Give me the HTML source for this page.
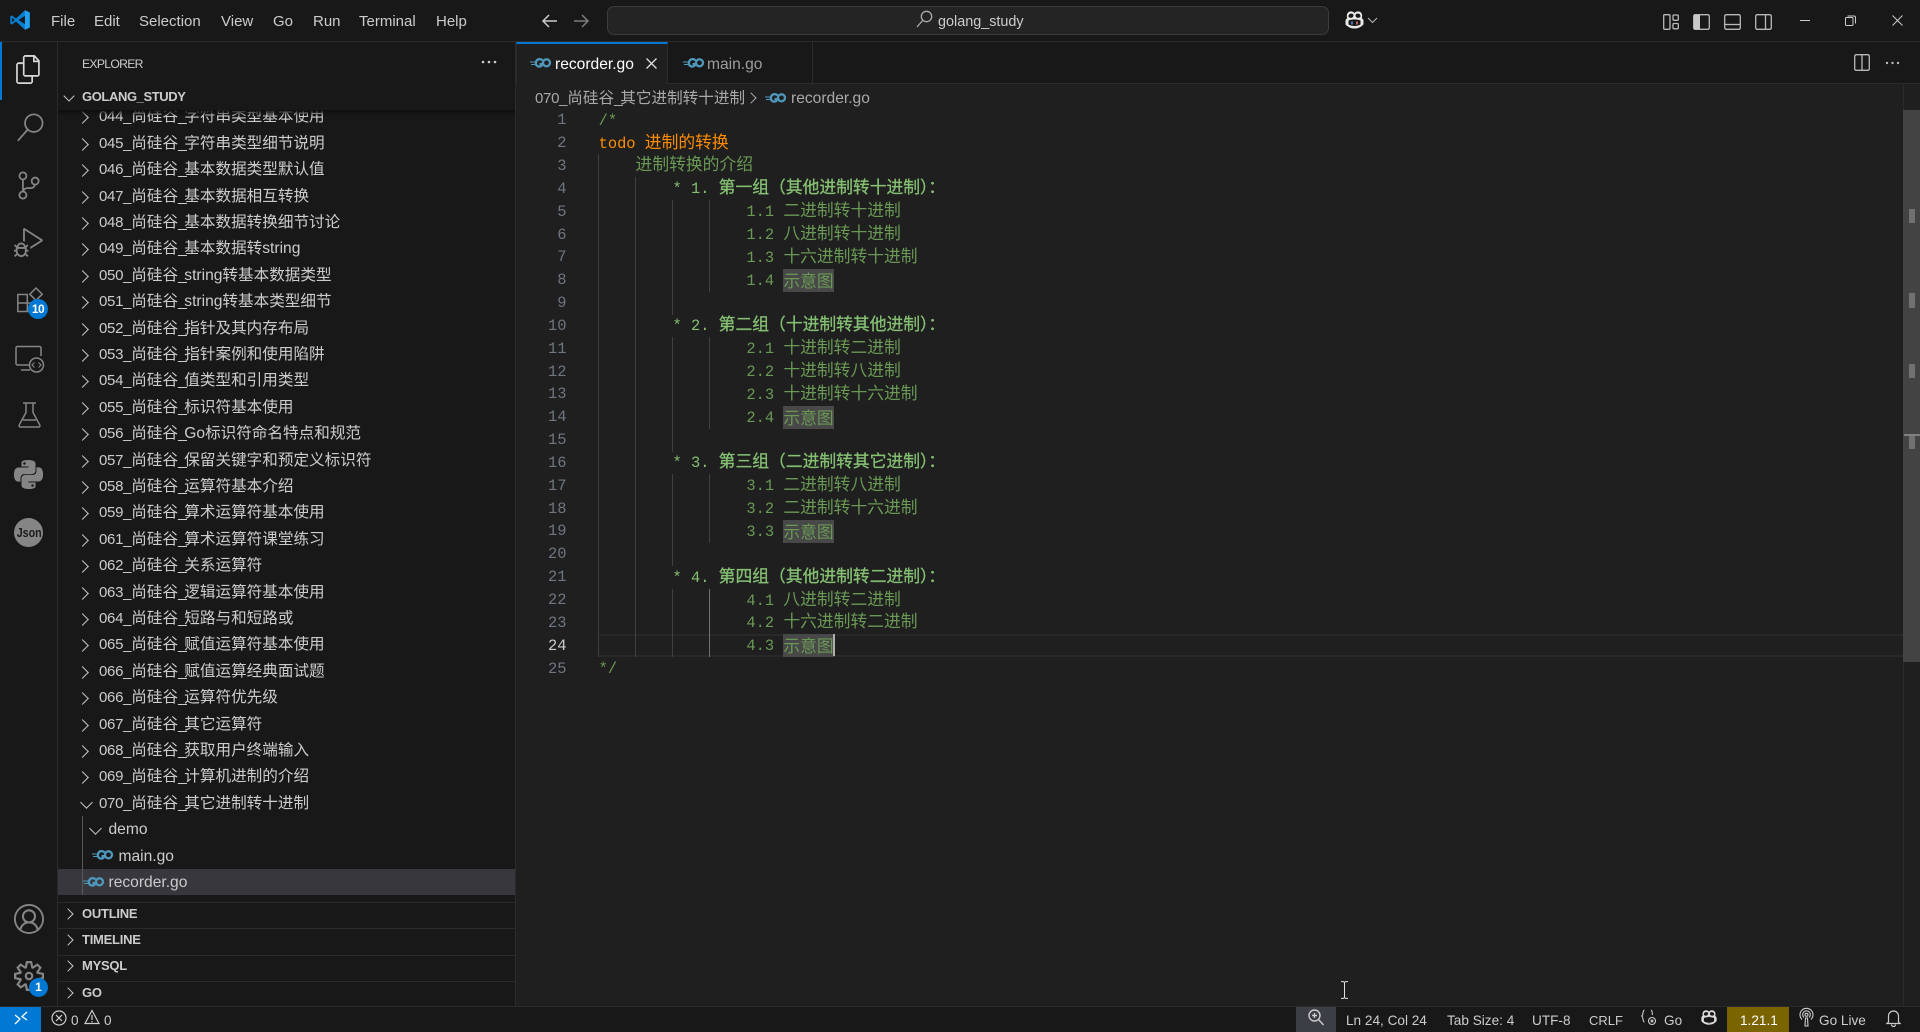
<!DOCTYPE html>
<html lang="zh"><head><meta charset="utf-8"><title>recorder.go - golang_study</title>
<style>
*{box-sizing:border-box;margin:0;padding:0}
html,body{width:1920px;height:1032px;overflow:hidden;background:#1f1f1f}
body{position:relative;font-family:"Liberation Sans","Noto Sans CJK SC",sans-serif;color:#ccc}
.a{position:absolute}
svg{position:absolute;display:block;overflow:visible}
.ic{fill:#858585}
.st{fill:none;stroke:#858585;stroke-width:1.5}
.t{position:absolute;white-space:nowrap}
.go{fill:none;stroke:#4f97bb;stroke-width:2.3}
.go path:first-child{stroke-width:1}
#title{left:0;top:0;width:1920px;height:42px;background:#181818;border-bottom:1px solid #2b2b2b}
.m{position:absolute;top:11px;font-size:15px;line-height:22px;color:#cccccc;white-space:nowrap}
#cc{left:607px;top:6px;width:722px;height:29px;background:#242424;border:1px solid #3c3c3c;border-radius:7px}
#act{left:0;top:42px;width:58px;height:964px;background:#181818;border-right:1px solid #2b2b2b}
#side{left:58px;top:42px;width:458px;height:964px;background:#181818;border-right:1px solid #2b2b2b}
#tree{position:absolute;left:0;top:68px;width:457px;height:795px;overflow:hidden}
#tree p{position:absolute;left:0;width:457px;height:26.4px;line-height:26.4px;font-size:15.6px;color:#cccccc;white-space:nowrap;padding-left:41px}
#tree p::before{content:"";position:absolute;left:20px;top:9px;width:8px;height:8px;border-top:1.4px solid #c5c5c5;border-right:1.4px solid #c5c5c5;transform:rotate(45deg)}
#tree p.o::before{left:23.5px;top:7px;transform:rotate(135deg)}
#tree p.d::before{left:33px}
#tree p.n::before{display:none}
u{display:inline-block;width:32.3px;text-decoration:none;font-size:15px;letter-spacing:-.02em}
s{text-decoration:none;letter-spacing:-2.5px}
.h{position:absolute;left:24px;font-size:13px;font-weight:bold;color:#cccccc;letter-spacing:-.25px;line-height:16px;white-space:nowrap}
.sep{position:absolute;left:0;width:457px;height:1px;background:#2b2b2b}
.ch{position:absolute;width:8px;height:8px;border-top:1.4px solid #c5c5c5;border-right:1.4px solid #c5c5c5;transform:rotate(45deg)}
#tabs{left:516px;top:42px;width:1404px;height:42px;background:#181818;border-bottom:1px solid #2b2b2b}
#code{left:598.6px;top:109.8px;font-family:"Liberation Mono","Noto Sans CJK SC",monospace;font-size:15.4px;color:#6a9955}
#code div{height:22.85px;line-height:22.85px;position:relative;white-space:pre}
#code i{font-style:normal;font-size:16.8px;line-height:0;font-family:"Noto Sans CJK SC",sans-serif}
#code .hl{background:#484848;display:inline-block;height:22.85px;line-height:22.85px;vertical-align:top;position:relative;top:-.8px}
#code .b{color:#84bf72}
#code .b i{-webkit-text-stroke:.3px #84bf72}
#code .td{color:#ff8c00}
#nums{left:520px;top:109.3px;width:46.5px;text-align:right;font-family:"Liberation Mono",monospace;font-size:15.4px;color:#6e7681}
#nums div{height:22.85px;line-height:22.85px}
.g{position:absolute;width:1px;background:#404040}
#status{left:0;top:1006px;width:1920px;height:26px;background:#181818;border-top:1px solid #2b2b2b;font-size:13.6px;color:#cccccc}
#status .t{top:3px;line-height:22px}
</style></head><body>

<div class="a" id="title">
<svg style="left:9px;top:9px" width="22" height="22" viewBox="0 0 24 24"><path d="M17.4 1.3 22.6 3.8V20.2L17.4 22.7 7.6 13.6 3.2 17 1.4 16V8l1.8-1 4.4 3.4z" fill="#0a7fd0"/><path d="M17.4 1.3 22.6 3.8V20.2L17.4 22.7z" fill="#21a2f0"/><path d="M17.4 7.4 10.6 12l6.8 4.6zM3.4 9.4V14.6L6 12z" fill="#181818"/></svg>
<span class="m" style="left:51px">File</span><span class="m" style="left:94px">Edit</span><span class="m" style="left:139px">Selection</span><span class="m" style="left:221px">View</span><span class="m" style="left:273px">Go</span><span class="m" style="left:313px">Run</span><span class="m" style="left:359px">Terminal</span><span class="m" style="left:436px">Help</span>
<svg style="left:541px;top:13px" width="18" height="16" viewBox="0 0 18 16"><path d="M16 8H2M8 2 2 8l6 6" fill="none" stroke="#cccccc" stroke-width="1.5"/></svg>
<svg style="left:572px;top:13px" width="18" height="16" viewBox="0 0 18 16"><path d="M2 8h14M10 2l6 6-6 6" fill="none" stroke="#7d7d7d" stroke-width="1.5"/></svg>
<div class="a" id="cc"></div>
<svg style="left:916px;top:10px" width="17" height="18" viewBox="0 0 17 18"><circle cx="10.5" cy="6.5" r="5.2" fill="none" stroke="#a9a9a9" stroke-width="1.3"/><path d="M6.8 10.3 1 17" stroke="#a9a9a9" stroke-width="1.3"/></svg>
<span class="t" style="left:938px;top:11px;font-size:14.4px;line-height:22px;color:#cccccc">golang_study</span>
<svg style="left:1344px;top:10px" width="21" height="20" viewBox="0 0 21 20"><path d="M3.2 8.2C2 4 4 1.4 7 1.4c1.6 0 2.8.6 3.5 1.7.7-1.1 1.9-1.7 3.5-1.7 3 0 5 2.6 3.8 6.8 1.2.6 1.7 1.6 1.7 2.8v2.6c0 .8-.5 1.5-1.2 1.9-2.100 2.100-4.800 3-7.800 3s-5.700-.9-7.800-2.900C2 15.500 1.500 14.800 1.500 14v-2.800c0-1.200.5-2.400 1.700-3z" fill="#e8e8e8"/><path d="M5 4.500c1-1 3.500-1.200 4.300 0 .5 1-.1 3-1.800 3.300-1.600.2-3.300-.4-3-2zM16 4.500c-1-1-3.500-1.200-4.300 0-.5 1 .1 3 1.800 3.300 1.600.2 3.300-.4 3-2zM4.500 10.500c3.500-1.300 8.500-1.300 12 0v4c-3.500 2-8.500 2-12 0z" fill="#181818"/><path d="M8 11.500v3" stroke="#4a7fd0" stroke-width="1.800"/><path d="M13 11.500v3" stroke="#d06a6a" stroke-width="1.800"/></svg>
<svg style="left:1367px;top:17px" width="11" height="7" viewBox="0 0 11 7"><path d="M1 1l4.500 4.500L10 1" fill="none" stroke="#b5b5b5" stroke-width="1.100"/></svg>
<svg style="left:1663px;top:14px" width="16" height="16" viewBox="0 0 16 16" fill="none" stroke="#b9b9b9" stroke-width="1.300"><rect x=".7" y=".7" width="6.300" height="14.600" rx="1"/><rect x="10" y="1" width="5.300" height="5.300" rx="1"/><rect x="10" y="9.500" width="5.300" height="5.300" rx="1"/></svg>
<svg style="left:1693px;top:14px" width="17" height="16" viewBox="0 0 17 16"><rect x=".7" y=".7" width="15.600" height="14.600" rx="1.500" fill="none" stroke="#b9b9b9" stroke-width="1.300"/><rect x="1" y="1" width="6" height="14" fill="#c8c8c8"/></svg>
<svg style="left:1724px;top:14px" width="17" height="16" viewBox="0 0 17 16" fill="none" stroke="#b9b9b9" stroke-width="1.300"><rect x=".7" y=".7" width="15.600" height="14.600" rx="1.500"/><path d="M1 10.500h15"/></svg>
<svg style="left:1755px;top:14px" width="17" height="16" viewBox="0 0 17 16" fill="none" stroke="#b9b9b9" stroke-width="1.300"><rect x=".7" y=".7" width="15.600" height="14.600" rx="1.500"/><path d="M10.500 1v14"/></svg>
<div class="a" style="left:1800px;top:20px;width:10px;height:1px;background:#cccccc"></div>
<svg style="left:1845px;top:15px" width="11" height="11" viewBox="0 0 11 11" fill="none" stroke="#cccccc" stroke-width="1"><rect x=".5" y="2.500" width="7.500" height="8" rx="1"/><path d="M2.500 1h6.500a1.500 1.500 0 0 1 1.500 1.500v6"/></svg>
<svg style="left:1892px;top:15px" width="11" height="11" viewBox="0 0 11 11"><path d="M.5.5l10 10M10.500.5l-10 10" stroke="#cccccc" stroke-width="1"/></svg>
</div>

<div class="a" id="act">
<div class="a" style="left:0;top:0;width:2px;height:58px;background:#0078d4"></div>
<svg style="left:15px;top:13px" width="27" height="29" viewBox="0 0 24 24" preserveAspectRatio="none"><path fill="#d7d7d7" d="M17.500 0h-9L7 1.500V6H2.500L1 7.500v15.070L2.500 24h12.070L16 22.570V18h4.700l1.300-1.430V4.500L17.500 0zm0 2.120l2.380 2.380H17.500V2.120zm-3 20.380h-12v-15H7v9.070L8.500 18h6v4.500zm6-6h-12v-15H16V6h4.500v10.500z"/></svg>
<svg style="left:15.500px;top:71px" width="28" height="29" viewBox="0 0 24 24"><path class="ic" d="M15.250 0a8.250 8.250 0 0 0-6.180 13.720L1 22.880l1.120 1 8.050-9.120A8.251 8.251 0 1 0 15.250.01V0zm0 15a6.750 6.750 0 1 1 0-13.500 6.750 6.750 0 0 1 0 13.500z"/></svg>
<svg style="left:15px;top:129px" width="28" height="29" viewBox="0 0 24 24"><path class="ic" d="M21.007 8.222A3.738 3.738 0 0 0 15.045 5.200a3.737 3.737 0 0 0 1.156 6.583 2.988 2.988 0 0 1-2.668 1.670h-2.990a4.456 4.456 0 0 0-2.989 1.165V7.400a3.737 3.737 0 1 0-1.494 0v9.117a3.776 3.776 0 1 0 1.816.099 2.990 2.990 0 0 1 2.668-1.667h2.990a4.484 4.484 0 0 0 4.223-3.039 3.736 3.736 0 0 0 3.250-3.687zM4.565 3.738a2.242 2.242 0 1 1 4.484 0 2.242 2.242 0 0 1-4.484 0zm4.484 16.441a2.242 2.242 0 1 1-4.484 0 2.242 2.242 0 0 1 4.484 0zm8.221-9.715a2.242 2.242 0 1 1 0-4.485 2.242 2.242 0 0 1 0 4.485z"/></svg>
<svg style="left:14px;top:186px" width="29" height="29" viewBox="0 0 24 24"><path class="ic" d="M10.940 13.500l-1.320 1.320a3.730 3.730 0 0 0-7.240 0L1.060 13.500 0 14.560l1.720 1.720-.22.220V18H0v1.500h1.500v.08c.077.489.214.966.41 1.420L0 22.940 1.060 24l1.650-1.650A4.308 4.308 0 0 0 6 24a4.310 4.310 0 0 0 3.290-1.650L10.940 24 12 22.940 10.090 21c.198-.464.336-.951.41-1.450v-.1H12V18h-1.500v-1.500l-.22-.22L12 14.560l-1.060-1.060zM6 13.500a2.250 2.250 0 0 1 2.250 2.250h-4.500A2.250 2.250 0 0 1 6 13.500zm3 6a3.330 3.330 0 0 1-3 3 3.330 3.330 0 0 1-3-3v-2.250h6v2.250zm14.760-9.900v1.260L13.500 17.370V15.600l8.500-5.370L9 2v9.460a5.070 5.070 0 0 0-1.500-.72V.63L8.640 0l15.120 9.600z"/></svg>
<svg style="left:17px;top:245px" width="26" height="26" viewBox="0 0 26 26"><path class="st" d="M.8 7.500h9.500v17H.8zM.8 16h17.500v8.500H10.300M10.300 7.500v8.500"/><path class="st" d="M19 1 25.200 7.200 19 13.400 12.800 7.200z"/></svg>
<div class="a" style="left:28px;top:257px;width:20px;height:20px;border-radius:50%;background:#0078d4;color:#fff;font-size:12px;font-weight:bold;line-height:20px;text-align:center;letter-spacing:-.5px">10</div>
<svg style="left:15px;top:303px" width="29" height="28" viewBox="0 0 29 28"><path class="st" d="M14 20H2.500A1.500 1.500 0 0 1 1 18.500V3A1.500 1.500 0 0 1 2.500 1.500h22A1.500 1.500 0 0 1 26 3v8M6 25h9"/><circle class="st" cx="21.500" cy="20" r="7"/><path d="M19.500 17.500 17 20l2.500 2.500M23.500 17.500 26 20l-2.500 2.500" fill="none" stroke="#858585" stroke-width="1.100"/></svg>
<svg style="left:18px;top:360px" width="23" height="26" viewBox="0 0 23 26"><path class="st" d="M5 1h13M8 1v9.500L1.200 23a1.300 1.300 0 0 0 1.200 2h18.200a1.300 1.300 0 0 0 1.200-2L15 10.500V1M5 18h13"/></svg>
<svg style="left:14px;top:418px" width="29" height="29" viewBox="0 0 24 24"><path class="ic" d="M14.250.18l.9.200.73.260.59.300.45.320.34.340.25.340.16.330.1.300.04.260.02.200-.01.130V8.500l-.05.630-.13.550-.21.460-.26.380-.3.310-.33.250-.35.190-.35.140-.33.100-.3.070-.26.040-.21.020H8.770l-.69.050-.59.140-.5.220-.41.270-.33.320-.27.350-.2.360-.15.370-.1.350-.07.320-.04.270-.02.210v3.060H3.170l-.21-.03-.28-.07-.32-.12-.35-.18-.36-.26-.36-.36-.35-.46-.32-.59-.28-.73-.21-.88-.14-1.050-.05-1.230.06-1.220.16-1.040.24-.87.32-.71.36-.57.4-.44.42-.33.42-.24.4-.16.36-.1.32-.05.24-.01h.16l.06.01h8.160v-.83H6.180l-.01-2.750-.02-.37.05-.34.11-.31.17-.28.25-.26.31-.23.38-.2.44-.18.51-.15.58-.12.64-.1.71-.06.77-.04.84-.02 1.270.05zm-6.300 1.980l-.23.33-.08.41.08.41.23.34.33.22.41.09.41-.09.33-.22.23-.34.08-.41-.08-.41-.23-.33-.33-.22-.41-.09-.41.09zm13.090 3.950l.28.06.32.12.35.18.36.27.36.35.35.47.32.59.28.73.21.88.14 1.040.05 1.230-.06 1.230-.16 1.040-.24.86-.32.71-.36.57-.4.45-.42.33-.42.24-.4.16-.36.09-.32.05-.24.02-.16-.01h-8.220v.82h5.840l.01 2.760.02.36-.05.34-.11.31-.17.29-.25.25-.31.24-.38.2-.44.17-.51.15-.58.13-.64.09-.71.07-.77.04-.84.01-1.270-.04-1.070-.14-.9-.2-.73-.25-.59-.3-.45-.33-.34-.34-.25-.34-.16-.33-.1-.3-.04-.25-.02-.2.01-.13v-5.340l.05-.64.13-.54.21-.46.26-.38.3-.32.33-.24.35-.2.35-.14.33-.1.3-.06.26-.04.21-.02.13-.01h5.840l.69-.05.59-.14.5-.21.41-.28.33-.32.27-.35.2-.36.15-.36.1-.35.07-.32.04-.28.02-.21V6.070h2.090l.14.01zm-6.470 14.250l-.23.33-.08.41.08.41.23.33.33.23.41.08.41-.08.33-.23.23-.33.08-.41-.08-.41-.23-.33-.33-.23-.41-.08-.41.08z"/></svg>
<div class="a" style="left:14px;top:475.500px;width:29px;height:29px;border-radius:50%;background:#858585;color:#1a1a1a;font-size:13px;font-weight:bold;line-height:29px;text-align:center"><span style="display:inline-block;transform:scaleX(.82)">Json</span></div>
<svg style="left:14px;top:862px" width="30" height="30" viewBox="0 0 16 16"><path class="ic" d="M16 7.992C16 3.580 12.416 0 8 0S0 3.580 0 7.992c0 2.430 1.104 4.620 2.832 6.090.016.016.032.016.032.032.144.112.288.224.448.336.08.048.144.111.224.175A7.980 7.980 0 0 0 8.016 16a7.980 7.980 0 0 0 4.480-1.375c.08-.048.144-.111.224-.16.144-.111.304-.223.448-.335.016-.016.032-.016.032-.032 1.696-1.487 2.800-3.676 2.800-6.106zm-8 7.001c-1.504 0-2.880-.48-4.016-1.279.016-.128.048-.255.08-.383a4.170 4.170 0 0 1 .416-.991c.176-.304.384-.576.64-.816.24-.24.528-.463.816-.639.304-.176.624-.304.976-.4A4.150 4.150 0 0 1 8 10.342a4.185 4.185 0 0 1 2.928 1.166c.368.368.656.8.864 1.295.112.288.192.592.24.911A7.030 7.030 0 0 1 8 14.993zm-2.448-7.400a2.490 2.490 0 0 1-.208-1.024c0-.351.064-.703.208-1.023.144-.32.336-.607.576-.847.24-.24.528-.431.848-.575.32-.144.672-.208 1.024-.208.368 0 .704.064 1.024.208.32.144.608.336.848.575.24.24.432.528.576.847.144.32.208.672.208 1.023 0 .368-.064.704-.208 1.023a3.010 3.010 0 0 1-.576.848 3.010 3.010 0 0 1-.848.575 2.590 2.590 0 0 1-2.064 0 3.010 3.010 0 0 1-.848-.575 2.500 2.500 0 0 1-.56-.848zm7.424 5.306c0-.032-.016-.048-.016-.08a5.220 5.220 0 0 0-.688-1.406 4.883 4.883 0 0 0-1.088-1.135 5.207 5.207 0 0 0-1.040-.608 2.820 2.820 0 0 0 .464-.383 4.200 4.200 0 0 0 .624-.784 3.624 3.624 0 0 0 .528-1.934 3.710 3.710 0 0 0-.288-1.470 3.799 3.799 0 0 0-.816-1.199 3.845 3.845 0 0 0-1.200-.8 3.720 3.720 0 0 0-1.472-.287 3.720 3.720 0 0 0-1.472.288 3.631 3.631 0 0 0-1.200.815 3.840 3.840 0 0 0-.8 1.199 3.710 3.710 0 0 0-.288 1.470c0 .352.048.688.144 1.007.096.336.224.64.4.927.16.288.384.544.624.784.144.144.304.271.48.383a5.120 5.120 0 0 0-1.040.624c-.416.32-.784.703-1.088 1.119a4.999 4.999 0 0 0-.688 1.406c-.016.032-.016.064-.016.08C1.776 11.636.992 9.910.992 7.992.992 4.140 4.144.991 8 .991s7.008 3.149 7.008 7.001a6.960 6.960 0 0 1-2.032 4.907z"/></svg>
<svg style="left:14px;top:919px" width="30" height="30" viewBox="0 0 24 24"><path class="ic" d="M19.850 8.750l4.150.83v4.840l-4.150.83 2.350 3.520-3.430 3.430-3.520-2.350-.83 4.150H9.580l-.83-4.150-3.520 2.350-3.430-3.430 2.350-3.520L0 14.420V9.580l4.150-.83L1.800 5.230 5.230 1.800l3.520 2.350L9.580 0h4.840l.83 4.150 3.520-2.350 3.430 3.430-2.350 3.520zm-1.570 5.070l4-.81v-2l-4-.81-.54-1.300 2.290-3.430-1.430-1.430-3.430 2.290-1.300-.54-.81-4h-2l-.81 4-1.300.54-3.430-2.290-1.430 1.430L6.380 8.900l-.54 1.300-4 .81v2l4 .81.54 1.300-2.290 3.430 1.430 1.430 3.430-2.290 1.300.54.81 4h2l.81-4 1.300-.54 3.430 2.290 1.430-1.430-2.290-3.430.54-1.300zm-8.186-4.672A3.430 3.430 0 0 1 12 8.570 3.440 3.440 0 0 1 15.430 12a3.430 3.430 0 1 1-5.336-2.852zm.956 4.274c.281.188.612.288.95.288A1.700 1.700 0 0 0 13.710 12a1.710 1.710 0 1 0-2.660 1.422z"/></svg>
<div class="a" style="left:29px;top:936px;width:19px;height:19px;border-radius:50%;background:#0078d4;color:#fff;font-size:12px;font-weight:bold;line-height:19px;text-align:center">1</div>
</div>

<div class="a" id="side">
<span class="t" style="left:24px;top:14px;font-size:12.2px;letter-spacing:-.7px;line-height:16px;color:#cccccc">EXPLORER</span>
<svg style="left:423px;top:18px" width="16" height="4" viewBox="0 0 16 4"><circle cx="2" cy="2" r="1.300" fill="#cccccc"/><circle cx="8" cy="2" r="1.300" fill="#cccccc"/><circle cx="14" cy="2" r="1.300" fill="#cccccc"/></svg>
<div class="ch" style="left:6.500px;top:50px;transform:rotate(135deg)"></div>
<span class="t h" style="top:47px;letter-spacing:-.4px">GOLANG_STUDY</span>
<div id="tree">
<p style="top:-5.600px"><u>044_</u>尚硅谷<s>_</s>字符串类型基本使用</p>
<p style="top:20.800px"><u>045_</u>尚硅谷<s>_</s>字符串类型细节说明</p>
<p style="top:47.200px"><u>046_</u>尚硅谷<s>_</s>基本数据类型默认值</p>
<p style="top:73.600px"><u>047_</u>尚硅谷<s>_</s>基本数据相互转换</p>
<p style="top:100px"><u>048_</u>尚硅谷<s>_</s>基本数据转换细节讨论</p>
<p style="top:126.400px"><u>049_</u>尚硅谷<s>_</s>基本数据转string</p>
<p style="top:152.800px"><u>050_</u>尚硅谷<s>_</s>string转基本数据类型</p>
<p style="top:179.200px"><u>051_</u>尚硅谷<s>_</s>string转基本类型细节</p>
<p style="top:205.600px"><u>052_</u>尚硅谷<s>_</s>指针及其内存布局</p>
<p style="top:232px"><u>053_</u>尚硅谷<s>_</s>指针案例和使用陷阱</p>
<p style="top:258.400px"><u>054_</u>尚硅谷<s>_</s>值类型和引用类型</p>
<p style="top:284.800px"><u>055_</u>尚硅谷<s>_</s>标识符基本使用</p>
<p style="top:311.200px"><u>056_</u>尚硅谷<s>_</s>Go标识符命名特点和规范</p>
<p style="top:337.600px"><u>057_</u>尚硅谷<s>_</s>保留关键字和预定义标识符</p>
<p style="top:364px"><u>058_</u>尚硅谷<s>_</s>运算符基本介绍</p>
<p style="top:390.400px"><u>059_</u>尚硅谷<s>_</s>算术运算符基本使用</p>
<p style="top:416.800px"><u>061_</u>尚硅谷<s>_</s>算术运算符课堂练习</p>
<p style="top:443.200px"><u>062_</u>尚硅谷<s>_</s>关系运算符</p>
<p style="top:469.600px"><u>063_</u>尚硅谷<s>_</s>逻辑运算符基本使用</p>
<p style="top:496px"><u>064_</u>尚硅谷<s>_</s>短路与和短路或</p>
<p style="top:522.400px"><u>065_</u>尚硅谷<s>_</s>赋值运算符基本使用</p>
<p style="top:548.800px"><u>066_</u>尚硅谷<s>_</s>赋值运算经典面试题</p>
<p style="top:575.200px"><u>066_</u>尚硅谷<s>_</s>运算符优先级</p>
<p style="top:601.600px"><u>067_</u>尚硅谷<s>_</s>其它运算符</p>
<p style="top:628px"><u>068_</u>尚硅谷<s>_</s>获取用户终端输入</p>
<p style="top:654.400px"><u>069_</u>尚硅谷<s>_</s>计算机进制的介绍</p>
<p class="o" style="top:680.800px"><u>070_</u>尚硅谷<s>_</s>其它进制转十进制</p>
<p class="o d" style="top:707.200px;padding-left:50.500px">demo</p>
<p class="n" style="top:733.600px;padding-left:60.500px">main.go</p>
<p class="n" style="top:759px;padding-left:50.500px;background:#37373d;line-height:28px">recorder.go</p>
<svg class="go" style="left:34px;top:739px" width="21" height="12" viewBox="0 0 21 12"><path d="M0 5h5M1 7.500h4"/><path d="M12.500 3.500C11 1.500 7 1.500 6 5c-.8 3 1.500 5 4 4.500 1.300-.3 2-1 2.500-2.500H9.500"/><circle cx="16.500" cy="5.800" r="3.500"/></svg>
<svg class="go" style="left:25px;top:765.500px" width="21" height="12" viewBox="0 0 21 12"><path d="M0 5h5M1 7.500h4"/><path d="M12.500 3.500C11 1.500 7 1.500 6 5c-.8 3 1.500 5 4 4.500 1.300-.3 2-1 2.500-2.500H9.500"/><circle cx="16.500" cy="5.800" r="3.500"/></svg>
<div class="a" style="left:24px;top:706px;width:1px;height:79px;background:#585858"></div>
</div>
<div class="a" style="left:0;top:68px;width:457px;height:6px;background:linear-gradient(#0e0e0e,rgba(14,14,14,0))"></div>
<div class="sep" style="top:860px"></div><div class="sep" style="top:886px"></div><div class="sep" style="top:913px"></div><div class="sep" style="top:939px"></div>
<div class="ch" style="left:6px;top:868px"></div><span class="h" style="top:864px">OUTLINE</span>
<div class="ch" style="left:6px;top:894px"></div><span class="h" style="top:890px">TIMELINE</span>
<div class="ch" style="left:6px;top:920px"></div><span class="h" style="top:916px">MYSQL</span>
<div class="ch" style="left:6px;top:947px"></div><span class="h" style="top:943px">GO</span>
</div>

<div class="a" id="tabs">
<div class="a" style="left:0;top:0;width:152px;height:42px;background:#1f1f1f;border-top:2px solid #0078d4;border-left:1px solid #2b2b2b;border-right:1px solid #2b2b2b"></div>
<svg class="go" style="left:14px;top:15px" width="21" height="12" viewBox="0 0 21 12"><path d="M0 5h5M1 7.500h4"/><path d="M12.500 3.500C11 1.500 7 1.500 6 5c-.8 3 1.500 5 4 4.500 1.300-.3 2-1 2.500-2.500H9.500"/><circle cx="16.500" cy="5.800" r="3.500"/></svg>
<span class="t" style="left:39px;top:12px;font-size:15.6px;line-height:22px;color:#ffffff">recorder.go</span>
<svg style="left:130px;top:16px" width="11" height="11" viewBox="0 0 11 11"><path d="M.5.5l10 10M10.500.5l-10 10" stroke="#dddddd" stroke-width="1.300"/></svg>
<svg class="go" style="left:167px;top:15px" width="21" height="12" viewBox="0 0 21 12"><path d="M0 5h5M1 7.500h4"/><path d="M12.500 3.500C11 1.500 7 1.500 6 5c-.8 3 1.500 5 4 4.500 1.300-.3 2-1 2.500-2.500H9.500"/><circle cx="16.500" cy="5.800" r="3.500"/></svg>
<span class="t" style="left:191px;top:12px;font-size:15.6px;line-height:22px;color:#9d9d9d">main.go</span>
<div class="a" style="left:296px;top:0;width:1px;height:41px;background:#2b2b2b"></div>
<svg style="left:1338px;top:12px" width="16" height="17" viewBox="0 0 16 17" fill="none" stroke="#b9b9b9" stroke-width="1.300"><rect x=".7" y=".7" width="14.600" height="15.600" rx="1.500"/><path d="M8 1v15"/></svg>
<svg style="left:1369px;top:19px" width="15" height="4" viewBox="0 0 15 4"><circle cx="2" cy="2" r="1.200" fill="#b9b9b9"/><circle cx="7.500" cy="2" r="1.200" fill="#b9b9b9"/><circle cx="13" cy="2" r="1.200" fill="#b9b9b9"/></svg>
</div>
<div class="a" style="left:516px;top:84px;width:1404px;height:922px;background:#1f1f1f"></div>
<span class="t" style="left:535px;top:88px;line-height:22px;font-size:15.600px;color:#a9a9a9"><u>070_</u>尚硅谷<s>_</s>其它进制转十进制</span>
<div class="ch" style="left:747px;top:94px;border-color:#a9a9a9"></div>
<svg class="go" style="left:765px;top:92px" width="21" height="12" viewBox="0 0 21 12"><path d="M0 5h5M1 7.500h4"/><path d="M12.500 3.500C11 1.500 7 1.500 6 5c-.8 3 1.500 5 4 4.500 1.300-.3 2-1 2.500-2.500H9.500"/><circle cx="16.500" cy="5.800" r="3.500"/></svg>
<span class="t" style="left:791px;top:88px;line-height:22px;font-size:15.600px;color:#a9a9a9">recorder.go</span>

<div class="a" style="left:598px;top:634px;width:1305px;height:23px;border-top:2px solid #282828;border-bottom:2px solid #282828"></div>
<div class="g" style="left:598px;top:154px;height:503px"></div>
<div class="g" style="left:635px;top:177px;height:480px"></div>
<div class="g" style="left:672px;top:200px;height:92px"></div><div class="g" style="left:709px;top:200px;height:92px"></div>
<div class="g" style="left:672px;top:292px;height:23px"></div>
<div class="g" style="left:672px;top:337px;height:92px"></div><div class="g" style="left:709px;top:337px;height:92px"></div>
<div class="g" style="left:672px;top:429px;height:23px"></div>
<div class="g" style="left:672px;top:474px;height:69px"></div><div class="g" style="left:709px;top:474px;height:69px"></div>
<div class="g" style="left:672px;top:543px;height:23px"></div>
<div class="g" style="left:672px;top:589px;height:68px"></div>
<div class="g" style="left:709px;top:589px;height:68px;background:#707070"></div>

<div class="a" id="nums"><div>1</div><div>2</div><div>3</div><div>4</div><div>5</div><div>6</div><div>7</div><div>8</div><div>9</div><div>10</div><div>11</div><div>12</div><div>13</div><div>14</div><div>15</div><div>16</div><div>17</div><div>18</div><div>19</div><div>20</div><div>21</div><div>22</div><div>23</div><div style="color:#cccccc">24</div><div>25</div></div>

<div class="a" id="code"><div>/*</div>
<div class="td">todo <i>进制的转换</i></div>
<div>    <i>进制转换的介绍</i></div>
<div class="b">        * 1. <i>第一组（其他进制转十进制）：</i></div>
<div>                1.1 <i>二进制转十进制</i></div>
<div>                1.2 <i>八进制转十进制</i></div>
<div>                1.3 <i>十六进制转十进制</i></div>
<div>                1.4 <i class="hl">示意图</i></div>
<div></div>
<div class="b">        * 2. <i>第二组（十进制转其他进制）：</i></div>
<div>                2.1 <i>十进制转二进制</i></div>
<div>                2.2 <i>十进制转八进制</i></div>
<div>                2.3 <i>十进制转十六进制</i></div>
<div>                2.4 <i class="hl">示意图</i></div>
<div></div>
<div class="b">        * 3. <i>第三组（二进制转其它进制）：</i></div>
<div>                3.1 <i>二进制转八进制</i></div>
<div>                3.2 <i>二进制转十六进制</i></div>
<div>                3.3 <i class="hl">示意图</i></div>
<div></div>
<div class="b">        * 4. <i>第四组（其他进制转二进制）：</i></div>
<div>                4.1 <i>八进制转二进制</i></div>
<div>                4.2 <i>十六进制转二进制</i></div>
<div>                4.3 <i class="hl">示意图</i></div>
<div>*/</div></div>
<div class="a" style="left:832.500px;top:634px;width:2px;height:22px;background:#aeafad"></div>

<div class="a" style="left:1903px;top:84px;width:1px;height:922px;background:#2b2b2b"></div>
<div class="a" style="left:1903px;top:110px;width:17px;height:552px;background:#434343"></div>
<div class="a" style="left:1909px;top:209px;width:6px;height:14px;background:#717171"></div>
<div class="a" style="left:1909px;top:293px;width:6px;height:15px;background:#717171"></div>
<div class="a" style="left:1909px;top:364px;width:6px;height:14px;background:#717171"></div>
<div class="a" style="left:1904px;top:434px;width:16px;height:2px;background:#7f7f7f"></div>
<div class="a" style="left:1909px;top:436px;width:6px;height:13px;background:#717171"></div>

<svg style="left:1340px;top:981px" width="9" height="18" viewBox="0 0 9 18"><path d="M1 .6h2.500L4.500 1.500 5.500.6H8M4.500 1.500v15M1 17.400h2.500l1-.9 1 .9H8" fill="none" stroke="#e0e0e0" stroke-width="1"/></svg>

<div class="a" id="status">
<div class="a" style="left:0;top:0;width:41px;height:26px;background:#0078d4"></div>
<svg style="left:14px;top:4px" width="14" height="14" viewBox="0 0 14 14" fill="none" stroke="#fff" stroke-width="1.300"><path d="M1 13 6 8 1 4M13 1 8 5.500 13 9"/></svg>
<svg style="left:51px;top:3px" width="16" height="16" viewBox="0 0 16 16" fill="none" stroke="#cccccc" stroke-width="1.200"><circle cx="8" cy="8" r="7"/><path d="M5 5l6 6M11 5l-6 6"/></svg>
<span class="t" style="left:71px">0</span>
<svg style="left:84px;top:2px" width="16" height="16" viewBox="0 0 16 16" fill="none" stroke="#cccccc" stroke-width="1.200"><path d="M8 1.500 15 14.500H1zM8 6v5M8 12v1.300"/></svg>
<span class="t" style="left:104px">0</span>
<div class="a" style="left:1296px;top:0;width:40px;height:26px;background:#3b3f45"></div>
<svg style="left:1308px;top:2px" width="16" height="17" viewBox="0 0 16 17" fill="none" stroke="#cccccc" stroke-width="1.400"><circle cx="6.500" cy="6.500" r="5.500"/><path d="M10.500 10.500 15.500 16M6.500 4v5M4 6.500h5"/></svg>
<span class="t" style="left:1346px">Ln 24, Col 24</span>
<span class="t" style="left:1447px">Tab Size: 4</span>
<span class="t" style="left:1532px">UTF-8</span>
<span class="t" style="left:1589px;font-size:13px">CRLF</span>
<svg style="left:1641px;top:2px" width="16" height="17" viewBox="0 0 16 17" fill="none" stroke="#cccccc" stroke-width="1.100"><path d="M3.500 1C1.500 1 2.500 6 .8 7 2.500 8 1.500 13 3.500 13M10 1c1.500.3 1 3 1.500 5"/><circle cx="11" cy="12" r="3.500"/><path d="M9.700 10.700l2.600 2.600M12.300 10.700l-2.600 2.600"/></svg>
<span class="t" style="left:1664px">Go</span>
<svg style="left:1700px;top:2px" width="18" height="17" viewBox="0 0 21 20"><path d="M3.200 8.200C2 4 4 1.400 7 1.400c1.600 0 2.800.6 3.500 1.700.7-1.100 1.900-1.700 3.500-1.700 3 0 5 2.600 3.800 6.800 1.200.6 1.700 1.600 1.700 2.800v2.600c0 .8-.5 1.500-1.200 1.900-2.100 2.100-4.800 3-7.800 3s-5.700-.9-7.800-2.900c-.7-.4-1.200-1.100-1.200-1.900v-2.800c0-1.200.5-2.400 1.700-3z" fill="#dddddd"/><path d="M5 4.500c1-1 3.500-1.200 4.300 0 .5 1-.1 3-1.800 3.300-1.600.2-3.300-.4-3-2zM16 4.500c-1-1-3.500-1.200-4.300 0-.5 1 .1 3 1.800 3.300 1.600.2 3.300-.4 3-2zM4.500 10.500c3.500-1.300 8.500-1.300 12 0v4c-3.500 2-8.500 2-12 0zM10 9h1v8h-1z" fill="#181818"/></svg>
<div class="a" style="left:1727px;top:0;width:62px;height:26px;background:#7a6400"></div>
<span class="t" style="left:1740px;color:#ffffff">1.21.1</span>
<svg style="left:1799px;top:1px" width="15" height="19" viewBox="0 0 15 19" fill="none" stroke="#cccccc" stroke-width="1.100"><path d="M3 11.500a6.500 6.500 0 1 1 9 0M5 9.500a3.800 3.800 0 1 1 5 0"/><circle cx="7.500" cy="6.800" r="1.500"/><path d="M6.500 10h2l.5 8H6z"/></svg>
<span class="t" style="left:1819px">Go Live</span>
<svg style="left:1886px;top:2px" width="15" height="18" viewBox="0 0 15 18" fill="none" stroke="#cccccc" stroke-width="1.200"><path d="M2.500 13V7a5 5 0 0 1 10 0v6l1.500 1.500H1zM5.500 15.500a2 2 0 0 0 4 0"/></svg>
</div>
</body></html>
